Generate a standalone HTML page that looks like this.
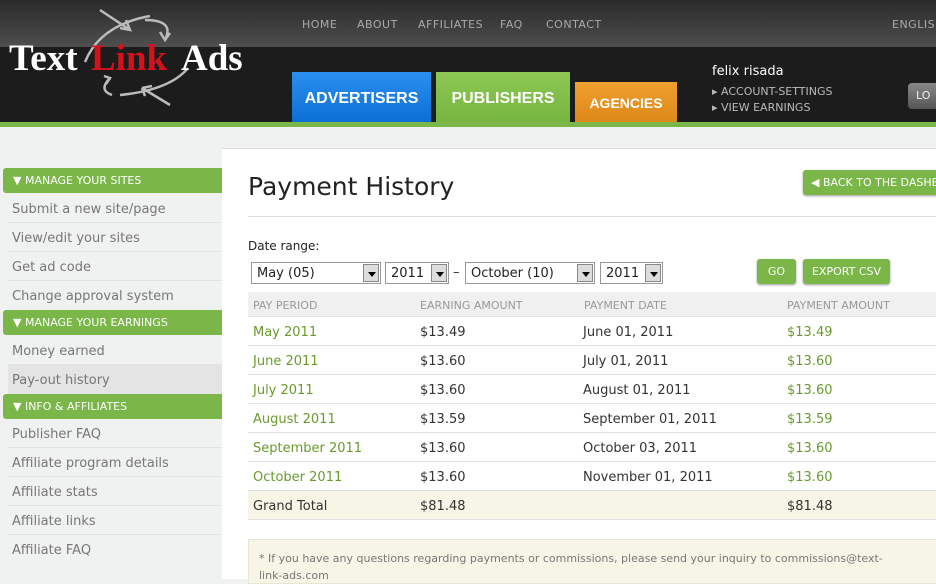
<!DOCTYPE html>
<html><head><meta charset="utf-8"><style>
*{margin:0;padding:0;box-sizing:border-box}
body{width:936px;height:579px;overflow:hidden;background:#f0f1f1;font-family:"DejaVu Sans","Liberation Sans",sans-serif;position:relative;color:#333}
.abs{position:absolute}
#hdr{left:0;top:0;width:936px;height:122px;background:#1c1c1c}
#topband{left:0;top:0;width:936px;height:47px;background:linear-gradient(#2a2a2a,#4e4e4e)}
.nav{top:18px;font-size:11px;color:#aaa;letter-spacing:.5px}
#green{left:0;top:122px;width:936px;height:5px;background:#7ab648}
.tab{font-family:"Liberation Sans",sans-serif;font-weight:bold;color:#fff;text-align:center;font-size:16px}
.side-h{left:3px;width:219px;height:25px;background:#7ab648;color:#fff;font-size:11px;padding-left:10px;line-height:26px;border-radius:3px 0 0 3px}
.side-i{left:8px;width:214px;height:29px;font-size:13px;color:#777;padding-left:4px;line-height:31px;border-bottom:1px solid #e2e2e2}
#panel{left:222px;top:148px;width:714px;height:431px;background:#fff;border-top:1px solid #ddd}
.sel{top:262px;height:22px;border:1px solid #999;background:#fff;font-size:13px;line-height:21px;padding-left:5px;color:#222}
.sel i{position:absolute;right:1px;top:1px;width:16px;height:18px;background:#ddd;border:1px solid #888}
.sel i:after{content:"";position:absolute;left:4px;top:7px;border:4px solid transparent;border-top:5px solid #000}
.btn{background:#7ab648;color:#fff;font-size:11px;text-align:center;border-radius:3px;box-shadow:0 1px 2px #999;white-space:nowrap;overflow:hidden}
.row{left:248px;width:688px;height:29px;border-bottom:1px solid #e0e0e0;font-size:13px;line-height:31px}
.row span{position:absolute}
.g{color:#6a9a2e}
</style></head><body>
<div id="hdr" class="abs"></div>
<div id="topband" class="abs"></div>
<svg class="abs" style="left:0;top:0" width="260" height="115">
<g fill="none" stroke="#bbb" stroke-width="2.5">
<path d="M100 10 L130 30"/><path d="M120 28 L130 30 L126 20"/>
<path d="M145 20 Q175 20 165 40"/><path d="M160 32 L165 40 L170 33"/>
<path d="M85 62 Q100 25 150 16"/>
<path d="M110 78 Q98 90 112 95"/><path d="M104 76 L110 78 L106 84"/>
<path d="M142 88 L170 105"/><path d="M142 88 L152 86 M142 88 L145 96"/>
<path d="M120 95 Q170 90 188 68"/>
</g>
<text x="9" y="70" font-family="Liberation Serif" font-weight="bold" font-size="37" fill="#fff">Text</text>
<text x="91" y="70" font-family="Liberation Serif" font-weight="bold" font-size="37" fill="#d5121c">Link</text>
<text x="181" y="70" font-family="Liberation Serif" font-weight="bold" font-size="37" fill="#fff">Ads</text>
</svg>
<div class="abs nav" style="left:302px">HOME</div>
<div class="abs nav" style="left:357px">ABOUT</div>
<div class="abs nav" style="left:418px">AFFILIATES</div>
<div class="abs nav" style="left:500px">FAQ</div>
<div class="abs nav" style="left:546px">CONTACT</div>
<div class="abs nav" style="left:892px">ENGLISH</div>
<div class="abs tab" style="left:292px;top:72px;width:139px;height:50px;background:linear-gradient(#2a8ff0,#0c6fd6);line-height:54px">ADVERTISERS</div>
<div class="abs tab" style="left:436px;top:72px;width:134px;height:55px;background:linear-gradient(#8cc754,#74b43e);line-height:54px">PUBLISHERS</div>
<div class="abs tab" style="left:575px;top:82px;width:102px;height:40px;background:linear-gradient(#f0a030,#dd8818);line-height:42px;font-size:14px">AGENCIES</div>
<div class="abs" style="left:712px;top:64px;color:#fff;font-size:13px">felix risada</div>
<div class="abs" style="left:712px;top:84px;color:#bbb;font-size:11px;line-height:16px">▸ ACCOUNT-SETTINGS<br>▸ VIEW EARNINGS</div>
<div class="abs" style="left:908px;top:83px;width:40px;height:26px;background:linear-gradient(#888,#555);border-radius:4px;color:#eee;font-size:11px;line-height:26px;padding-left:8px">LO</div>
<div id="green" class="abs"></div>

<div class="abs side-h" style="top:168px">▼ MANAGE YOUR SITES</div>
<div class="abs side-i" style="top:194px">Submit a new site/page</div>
<div class="abs side-i" style="top:223px">View/edit your sites</div>
<div class="abs side-i" style="top:252px">Get ad code</div>
<div class="abs side-i" style="top:281px;border:none">Change approval system</div>
<div class="abs side-h" style="top:310px">▼ MANAGE YOUR EARNINGS</div>
<div class="abs side-i" style="top:336px">Money earned</div>
<div class="abs side-i" style="top:365px;background:#e4e4e4;border:none">Pay-out history</div>
<div class="abs side-h" style="top:394px">▼ INFO &amp; AFFILIATES</div>
<div class="abs side-i" style="top:419px">Publisher FAQ</div>
<div class="abs side-i" style="top:448px">Affiliate program details</div>
<div class="abs side-i" style="top:477px">Affiliate stats</div>
<div class="abs side-i" style="top:506px">Affiliate links</div>
<div class="abs side-i" style="top:535px;border:none">Affiliate FAQ</div>

<div id="panel" class="abs"></div>
<div class="abs" style="left:248px;top:172px;font-size:25px;color:#222">Payment History</div>
<div class="abs btn" style="left:803px;top:170px;width:140px;height:25px;line-height:25px;text-align:left;padding-left:8px">◀ BACK TO THE DASHBOARD</div>
<div class="abs" style="left:248px;top:216px;width:688px;height:1px;background:#ddd"></div>
<div class="abs" style="left:248px;top:239px;font-size:12px;color:#222">Date range:</div>
<div class="abs sel" style="left:251px;width:130px">May (05)<i></i></div>
<div class="abs sel" style="left:385px;width:64px">2011<i></i></div>
<div class="abs" style="left:453px;top:265px;font-size:13px">–</div>
<div class="abs sel" style="left:465px;width:130px">October (10)<i></i></div>
<div class="abs sel" style="left:600px;width:63px">2011<i></i></div>
<div class="abs btn" style="left:757px;top:259px;width:39px;height:25px;line-height:26px">GO</div>
<div class="abs btn" style="left:803px;top:259px;width:87px;height:25px;line-height:26px">EXPORT CSV</div>

<div class="abs row" style="top:292px;height:25px;background:#f0f0f0;font-size:11px;color:#999;line-height:27px"><span style="left:5px">PAY PERIOD</span><span style="left:172px">EARNING AMOUNT</span><span style="left:336px">PAYMENT DATE</span><span style="left:539px">PAYMENT AMOUNT</span></div>
<div class="abs row" style="top:317px"><span class="g" style="left:5px">May 2011</span><span style="left:172px">$13.49</span><span style="left:335px">June 01, 2011</span><span class="g" style="left:539px">$13.49</span></div>
<div class="abs row" style="top:346px"><span class="g" style="left:5px">June 2011</span><span style="left:172px">$13.60</span><span style="left:335px">July 01, 2011</span><span class="g" style="left:539px">$13.60</span></div>
<div class="abs row" style="top:375px"><span class="g" style="left:5px">July 2011</span><span style="left:172px">$13.60</span><span style="left:335px">August 01, 2011</span><span class="g" style="left:539px">$13.60</span></div>
<div class="abs row" style="top:404px"><span class="g" style="left:5px">August 2011</span><span style="left:172px">$13.59</span><span style="left:335px">September 01, 2011</span><span class="g" style="left:539px">$13.59</span></div>
<div class="abs row" style="top:433px"><span class="g" style="left:5px">September 2011</span><span style="left:172px">$13.60</span><span style="left:335px">October 03, 2011</span><span class="g" style="left:539px">$13.60</span></div>
<div class="abs row" style="top:462px"><span class="g" style="left:5px">October 2011</span><span style="left:172px">$13.60</span><span style="left:335px">November 01, 2011</span><span class="g" style="left:539px">$13.60</span></div>
<div class="abs row" style="top:491px;background:#f6f5e6"><span style="left:5px">Grand Total</span><span style="left:172px">$81.48</span><span style="left:539px">$81.48</span></div>
<div class="abs" style="left:248px;top:539px;width:700px;height:45px;background:#f6f5e6;border:1px solid #e6e6d6;font-size:11px;color:#777;padding:10px 0 0 10px;line-height:17px">* If you have any questions regarding payments or commissions, please send your inquiry to commissions@text-<br>link-ads.com</div>
</body></html>
